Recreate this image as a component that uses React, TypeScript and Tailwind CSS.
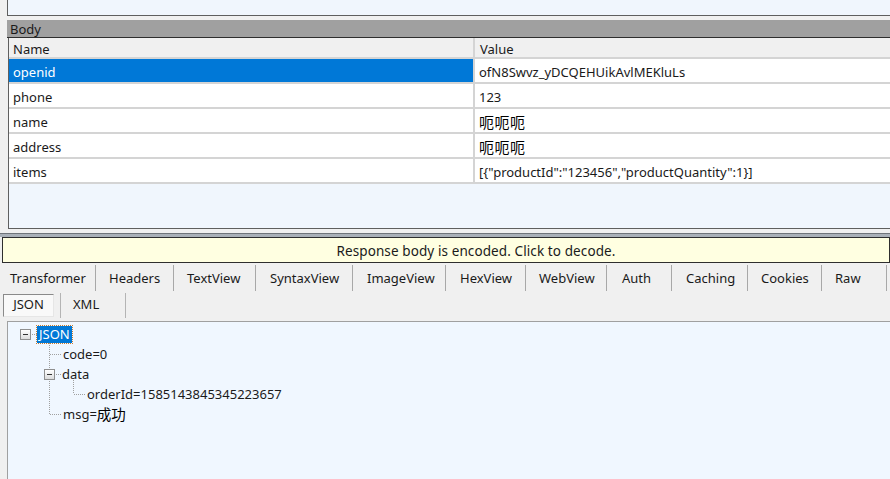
import React from 'react';

const rows = [
  { name: 'openid', value: 'ofN8Swvz_yDCQEHUikAvlMEKluLs', selected: true },
  { name: 'phone', value: '123' },
  { name: 'name', value: '呃呃呃', cjk: true },
  { name: 'address', value: '呃呃呃', cjk: true },
  { name: 'items', value: '[{"productId":"123456","productQuantity":1}]' },
];

const tabs = [
  { label: 'Transformer', w: 96, pad: 10 },
  { label: 'Headers', w: 78, pad: 13 },
  { label: 'TextView', w: 82, pad: 13 },
  { label: 'SyntaxView', w: 97, pad: 14 },
  { label: 'ImageView', w: 93, pad: 14 },
  { label: 'HexView', w: 80, pad: 14 },
  { label: 'WebView', w: 81, pad: 13 },
  { label: 'Auth', w: 65, pad: 15 },
  { label: 'Caching', w: 76, pad: 14 },
  { label: 'Cookies', w: 74, pad: 13 },
  { label: 'Raw', w: 65, pad: 13 },
];

const font = { fontFamily: '"Noto Sans", "Noto Sans CJK SC", sans-serif' };

// minus box for tree nodes
const Toggle = () => (
  <span className="w-[11px] h-[11px] border border-[#8f8f8f] bg-gradient-to-b from-white to-[#dcdcdc] flex items-center justify-center shrink-0">
    <span className="w-[5px] h-px bg-[#333]" />
  </span>
);

export default function App() {
  return (
    <div
      className="w-[890px] h-[479px] overflow-hidden bg-[#f0f0f0] flex flex-col text-[13px] text-[#1a1a1a]"
      style={font}
    >
      {/* previous panel */}
      <div className="ml-[7px] h-[16px] shrink-0 bg-[#f0f6fd] border-l border-b border-[#5f5f5f]" />
      <div className="h-[4px] shrink-0" />

      {/* Body header */}
      <div className="ml-[7px] h-[18px] shrink-0 bg-[#a0a0a0] border-b border-[#2e2e2e] flex items-center pl-[3px] pt-[2px] leading-none">
        Body
      </div>

      {/* Body grid */}
      <div className="ml-[8px] h-[191px] shrink-0 bg-[#f0f6fd] border-l border-b border-[#5f5f5f] flex flex-col">
        <div className="h-[21px] bg-[#f0f0f0] border-b-2 border-[#d4d4d4] flex">
          <div className="w-[466px] border-r-2 border-[#d4d4d4] pl-[4px] pt-[4px] flex items-center leading-none">Name</div>
          <div className="flex-1 pl-[5px] pt-[4px] flex items-center leading-none">Value</div>
        </div>
        {rows.map((r) => (
          <div key={r.name} className="h-[25px] bg-white border-b-2 border-[#d4d4d4] flex">
            <div
              className={`w-[466px] border-r-2 border-[#d4d4d4] pl-[4px] pt-[4px] flex items-center leading-none ${r.selected ? 'bg-[#0078d7] text-white' : ''}`}
            >
              {r.name}
            </div>
            <div
              className={`flex-1 pl-[4px] pt-[4px] flex items-center leading-none whitespace-nowrap ${r.cjk ? 'text-[15px] tracking-[0.5px] text-black' : ''}`}
            >
              {r.value}
            </div>
          </div>
        ))}
      </div>

      {/* splitter */}
      <div className="h-[4px] shrink-0" />
      <div className="h-px shrink-0 bg-[#6f747a]" />
      <div className="h-[3px] shrink-0 bg-[#a9b0b8]" />

      {/* encoded notice */}
      <div className="ml-[2px] h-[26px] shrink-0 bg-[#ffffe1] border border-[#2e2e2e] flex items-center justify-center pl-[60px] pt-[3px] leading-none text-[13.5px] tracking-[0.1px]">
        Response body is encoded. Click to decode.
      </div>

      {/* tabs */}
      <div className="h-[28px] shrink-0 flex pt-[2px]">
        {tabs.map((t) => (
          <div
            key={t.label}
            style={{ width: t.w, paddingLeft: t.pad }}
            className="shrink-0 border-r border-[#a8a8a8] flex items-center leading-none whitespace-nowrap"
          >
            {t.label}
          </div>
        ))}
      </div>

      {/* sub tabs */}
      <div className="h-[30px] shrink-0 flex items-center pl-[3px] pb-px">
        <div className="w-[51px] h-[23px] bg-[#f9f9f9] border border-t-[#8a8a8a] border-l-[#8a8a8a] border-r-[#e6e6e6] border-b-[#e6e6e6] flex items-center justify-center pb-[2px] leading-none">
          JSON
        </div>
        <div className="w-px h-[25px] bg-[#b4b4b4] ml-[6px]" />
        <div className="w-[64px] flex items-center pl-[12px] pb-[2px] leading-none">XML</div>
        <div className="w-px h-[25px] bg-[#b4b4b4]" />
      </div>

      {/* tree */}
      <div className="ml-[7px] flex-1 bg-[#f0f7ff] border-l border-t border-[#a0a0a0] relative">
        <svg className="absolute inset-0 pointer-events-none" width="883" height="158">
          <g stroke="#a0a0a0" strokeWidth="1" strokeDasharray="1 1" shapeRendering="crispEdges">
            <line x1="24" y1="12.5" x2="29" y2="12.5" />
            <line x1="41.5" y1="21" x2="41.5" y2="92" />
            <line x1="42" y1="32.5" x2="53" y2="32.5" />
            <line x1="48" y1="52.5" x2="53" y2="52.5" />
            <line x1="65.5" y1="58" x2="65.5" y2="72" />
            <line x1="66" y1="72.5" x2="77" y2="72.5" />
            <line x1="42" y1="92.5" x2="53" y2="92.5" />
          </g>
        </svg>
        <div className="relative flex flex-col pt-[2px]">
          <div className="h-[20px] flex items-center pl-[12px]">
            <Toggle />
            <span className="ml-[6px] px-[2px] h-[17px] bg-[#0078d7] text-white flex items-center leading-none outline-1 outline-dotted outline-[#c87b2d]">
              JSON
            </span>
          </div>
          <div className="h-[20px] flex items-center pl-[55px] leading-none">code=0</div>
          <div className="h-[20px] flex items-center pl-[36px] leading-none">
            <Toggle />
            <span className="ml-[7px]">data</span>
          </div>
          <div className="h-[20px] flex items-center pl-[79px] leading-none">orderId=1585143845345223657</div>
          <div className="h-[20px] flex items-center pl-[55px] leading-none">
            msg=<span className="text-[14.5px] text-black">成功</span>
          </div>
        </div>
      </div>
    </div>
  );
}
